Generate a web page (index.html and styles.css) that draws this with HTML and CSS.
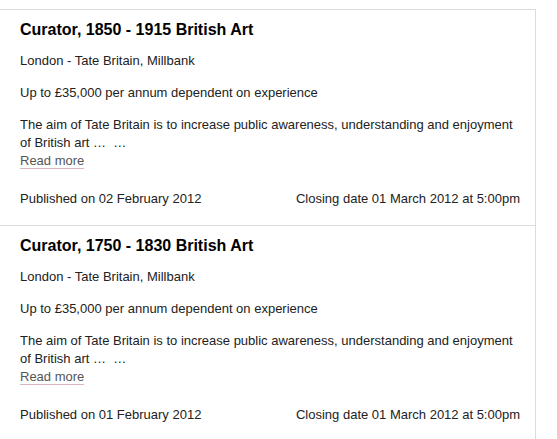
FILE: index.html
```html
<!DOCTYPE html>
<html>
<head>
<meta charset="utf-8">
<link rel="stylesheet" href="styles.css">
</head>
<body>
<div class="list">
  <div class="job">
    <h2 class="job-title">Curator, 1850 - 1915 British Art</h2>
    <p class="job-line">London - Tate Britain, Millbank</p>
    <p class="job-line">Up to £35,000 per annum dependent on experience</p>
    <p class="job-desc">The aim of Tate Britain is to increase public awareness, understanding and enjoyment of British art …&nbsp; …<br><a class="read-more" href="#">Read more</a></p>
    <div class="job-dates">
      <span>Published on 02 February 2012</span>
      <span>Closing date 01 March 2012 at 5:00pm</span>
    </div>
  </div>
  <div class="job">
    <h2 class="job-title">Curator, 1750 - 1830 British Art</h2>
    <p class="job-line">London - Tate Britain, Millbank</p>
    <p class="job-line">Up to £35,000 per annum dependent on experience</p>
    <p class="job-desc">The aim of Tate Britain is to increase public awareness, understanding and enjoyment of British art …&nbsp; …<br><a class="read-more" href="#">Read more</a></p>
    <div class="job-dates">
      <span>Published on 01 February 2012</span>
      <span>Closing date 01 March 2012 at 5:00pm</span>
    </div>
  </div>
</div>
</body>
</html>
```
FILE: styles.css
```css
html, body {
  margin: 0;
  padding: 0;
  background: #fff;
}
body {
  font-family: "Liberation Sans", Arial, sans-serif;
  color: #222;
  font-size: 13px;
}
.list {
  margin-top: 9px;
  width: 535px;
  border-top: 1px solid #dcdcdc;
  border-right: 1px solid #dcdcdc;
}
.job {
  padding: 10px 15px 17px 20px;
  border-bottom: 1px solid #dcdcdc;
}
.job-title {
  margin: 0;
  font-size: 16px;
  line-height: 20px;
  font-weight: bold;
  color: #000;
}
.job-line {
  margin: 12px 0 0;
  line-height: 18px;
}
.job-line + .job-line {
  margin-top: 14px;
}
.job-desc {
  margin: 14px 0 0;
  line-height: 18px;
}
.read-more {
  color: #555;
  text-decoration: none;
  border-bottom: 1px solid #d9b3c6;
}
.job-dates {
  margin-top: 20px;
  line-height: 18px;
  display: flex;
  justify-content: space-between;
}
```
